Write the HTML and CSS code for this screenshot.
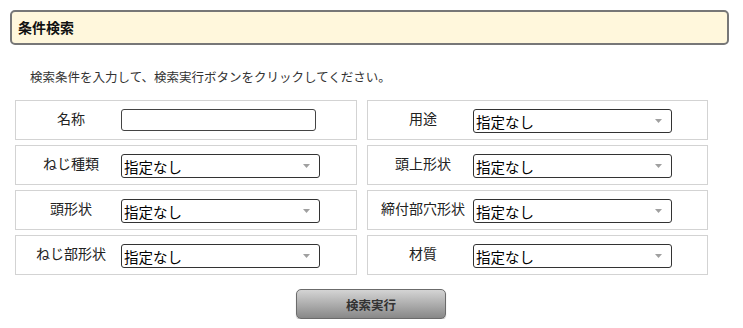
FILE: index.html
```html
<!DOCTYPE html>
<html lang="ja">
<head>
    <meta charset="UTF-8">
    <title>条件検索</title>
    <link rel="stylesheet" href="styles.css">
</head>
<body>
    <div class="page">
        <div class="heading">条件検索</div>
        <p class="lead">検索条件を入力して、検索実行ボタンをクリックしてください。</p>

        <div class="conditions">
            <div class="cell">
                <label class="cell-label" for="name">名称</label>
                <input type="text" id="name" class="text-field">
            </div>
            <div class="cell">
                <label class="cell-label" for="use">用途</label>
                <select id="use" class="pick"><option>指定なし</option></select>
            </div>
            <div class="cell">
                <label class="cell-label" for="thread">ねじ種類</label>
                <select id="thread" class="pick"><option>指定なし</option></select>
            </div>
            <div class="cell">
                <label class="cell-label" for="headtop">頭上形状</label>
                <select id="headtop" class="pick"><option>指定なし</option></select>
            </div>
            <div class="cell">
                <label class="cell-label" for="head">頭形状</label>
                <select id="head" class="pick"><option>指定なし</option></select>
            </div>
            <div class="cell">
                <label class="cell-label" for="hole">締付部穴形状</label>
                <select id="hole" class="pick"><option>指定なし</option></select>
            </div>
            <div class="cell">
                <label class="cell-label" for="threadshape">ねじ部形状</label>
                <select id="threadshape" class="pick"><option>指定なし</option></select>
            </div>
            <div class="cell">
                <label class="cell-label" for="material">材質</label>
                <select id="material" class="pick"><option>指定なし</option></select>
            </div>
        </div>

        <div class="actions">
            <button class="search-btn">検索実行</button>
        </div>
    </div>
</body>
</html>
```

FILE: styles.css
```css
body { margin: 0; font-family: "Noto Sans CJK JP", "Noto Sans", sans-serif; color: #222; background: #fff; }
.page { padding: 10px 14px 0 10px; }
.heading { height: 31px; line-height: 31px; padding-left: 6px; border: 2px solid #777; border-radius: 5px; background: #fff7dc; font-size: 14px; font-weight: bold; color: #111; }
.lead { margin: 23px 0 0 20px; height: 32px; line-height: 18px; font-size: 12.5px; color: #333; }
.conditions { display: grid; grid-template-columns: 342px 341px; grid-auto-rows: 40px; column-gap: 10px; row-gap: 5px; margin-left: 5px; }
.cell { display: flex; align-items: flex-start; box-sizing: border-box; padding-top: 7px; border: 1px solid #d3d3d3; }
.cell-label { flex: 0 0 105px; box-sizing: border-box; padding-left: 5px; text-align: center; font-size: 14px; line-height: 20px; }
.text-field { width: 195px; height: 22px; box-sizing: border-box; margin: 1px 0 0; padding: 0 3px; border: 1px solid #444; border-radius: 3px; font-size: 14px; font-family: inherit; }
.pick { -webkit-appearance: none; appearance: none; width: 199px; height: 24px; box-sizing: border-box; margin: 1px 0 0; padding: 1px 0 0 2px; border: 1px solid #333; border-radius: 3px; font-size: 14.5px; font-family: inherit; color: #000; background: #fff url("data:image/svg+xml,%3Csvg xmlns='http://www.w3.org/2000/svg' width='7' height='4'%3E%3Cpath d='M0 0h7L3.5 4z' fill='%23a0a0a0'/%3E%3C/svg%3E") no-repeat right 9px center; line-height: 21px; }
.actions { display: flex; justify-content: center; padding: 14px 0 0 3px; }
.search-btn { width: 150px; height: 30px; border: 1px solid #6b6b6b; border-radius: 5px; background: linear-gradient(#d4d4d4, #888); font-family: inherit; font-size: 12.5px; font-weight: bold; color: #333; box-shadow: 0 1px 1px rgba(0,0,0,0.3); }
```
